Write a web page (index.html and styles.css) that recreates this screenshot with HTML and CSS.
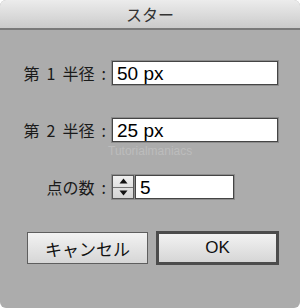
FILE: index.html
```html
<!DOCTYPE html>
<html lang="ja">
<head>
<meta charset="utf-8">
<link rel="stylesheet" href="styles.css">
</head>
<body>
<div class="dialog">
  <div class="titlebar">スター</div>
  <div class="form">
    <label class="label">第 1 半径 :</label>
    <div class="field wide">50 px</div>
    <label class="label">第 2 半径 :</label>
    <div class="field wide">25 px</div>
    <label class="label">点の数 :</label>
    <div class="spin">
      <div class="stepper">
        <div class="step up"><svg width="9" height="6" viewBox="0 0 9 6"><path d="M4.5 0.5 L8.5 5.5 L0.5 5.5 Z" fill="#111"/></svg></div>
        <div class="step down"><svg width="9" height="6" viewBox="0 0 9 6"><path d="M0.5 0.5 L8.5 0.5 L4.5 5.5 Z" fill="#111"/></svg></div>
      </div>
      <div class="field narrow">5</div>
    </div>
    <div class="watermark">Tutorialmaniacs</div>
  </div>
  <div class="buttons">
    <button class="btn cancel">キャンセル</button>
    <button class="btn ok">OK</button>
  </div>
</div>
</body>
</html>
```
FILE: styles.css
```css
html, body {
  margin: 0;
  padding: 0;
  background: #ffffff;
}
.dialog {
  width: 300px;
  height: 308px;
  background: #acacac;
  border-radius: 6px;
  overflow: hidden;
  font-family: "Noto Sans CJK JP", "Liberation Sans", sans-serif;
  color: #1a1a1a;
}
.titlebar {
  height: 28px;
  line-height: 28px;
  border-bottom: 2px solid #7a7a7a;
  background: linear-gradient(#ececec, #cbcbcb);
  text-align: center;
  font-size: 16px;
  color: #333;
}
.form {
  position: relative;
  display: grid;
  grid-template-columns: 106px 166px;
  column-gap: 6px;
  row-gap: 33px;
  padding-top: 31px;
  align-items: center;
}
.label {
  font-size: 16px;
  word-spacing: 3.5px;
  text-align: right;
  white-space: nowrap;
  line-height: 24px;
}
.field {
  height: 22px;
  background: #fff;
  border: 1px solid #454545;
  box-shadow: 0 0 0 1px #8c8c8c;
  font-family: "Liberation Sans", Arial, sans-serif;
  font-size: 19px;
  line-height: 23px;
  padding-left: 4px;
  color: #000;
}
.spin {
  display: flex;
  gap: 1px;
  align-items: center;
}
.stepper {
  width: 20px;
  height: 22px;
  border: 1px solid #555;
  box-shadow: 0 0 0 1px #8c8c8c;
  display: flex;
  flex-direction: column;
  background: linear-gradient(#f0f0f0, #d4d4d4);
}
.step {
  flex: 1;
  display: flex;
  align-items: center;
  justify-content: center;
}
.step.up {
  border-bottom: 1px solid #777;
}
.narrow {
  width: 93px;
}
.watermark {
  position: absolute;
  left: 108px;
  top: 114px;
  font-family: "Liberation Sans", Arial, sans-serif;
  font-size: 12px;
  color: #bcbcbc;
}
.buttons {
  display: flex;
  align-items: center;
  gap: 8px;
  padding-left: 27px;
  margin-top: 32px;
}
.btn {
  font-family: "Noto Sans CJK JP", "Liberation Sans", sans-serif;
  font-size: 17px;
  color: #111;
  background: linear-gradient(#f2f2f2, #d6d6d6);
  padding: 0;
  margin: 0;
}
.cancel {
  width: 121px;
  height: 32px;
  border: 1px solid #5e5e5e;
}
.ok {
  width: 123px;
  height: 34px;
  border: 3px solid #4c4c4c;
  font-family: "Liberation Sans", Arial, sans-serif;
}
```
